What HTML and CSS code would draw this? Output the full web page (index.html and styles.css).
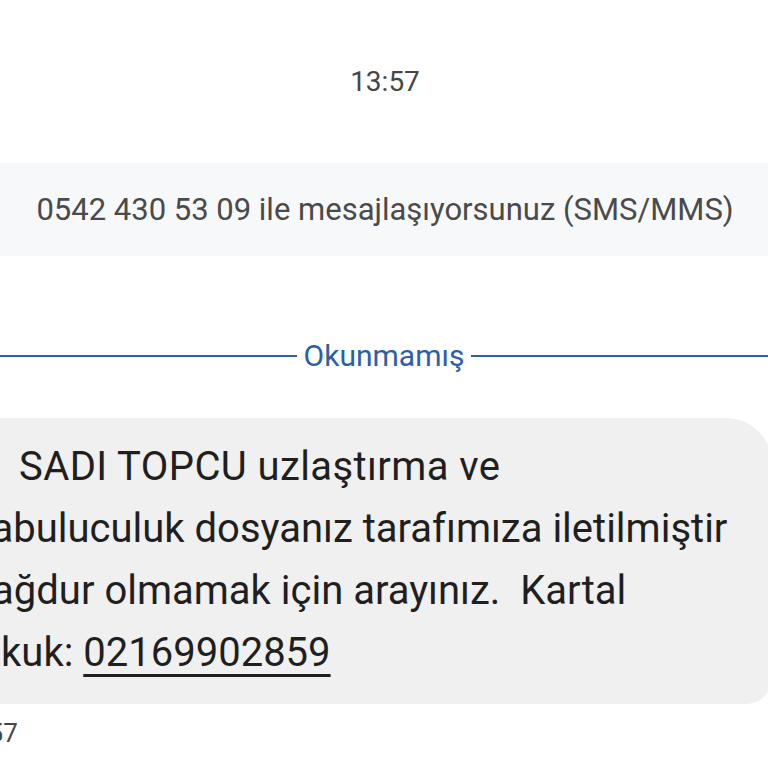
FILE: index.html
```html
<!DOCTYPE html>
<html lang="tr">
<head>
<meta charset="utf-8">
<title>Mesajlar</title>
<link rel="stylesheet" href="styles.css">
</head>
<body>
<main class="thread">
  <div class="time-header">13:57</div>
  <div class="sys-note">0542 430 53 09 ile mesajlaşıyorsunuz (SMS/MMS)</div>
  <div class="unread-divider">
    <span class="rule"></span>
    <span class="unread-label">Okunmamış</span>
    <span class="rule"></span>
  </div>
  <div class="bubble">
    <div class="line first">SADI TOPCU uzlaştırma ve</div>
    <div class="line">arabuluculuk dosyanız tarafımıza iletilmiştir</div>
    <div class="line">mağdur olmamak için arayınız.&nbsp; Kartal</div>
    <div class="line">hukuk: <span class="phone">02169902859</span></div>
  </div>
  <div class="msg-time">13:57</div>
</main>
</body>
</html>
```
FILE: styles.css
```css
html, body {
  margin: 0;
  padding: 0;
  background: #ffffff;
}
body {
  width: 768px;
  height: 768px;
  overflow: hidden;
  font-family: Roboto, "Noto Sans", "Liberation Sans", sans-serif;
}
.thread {
  display: flex;
  flex-direction: column;
}
.time-header {
  padding-top: 62px;
  height: 40px;
  line-height: 40px;
  text-align: center;
  font-size: 28px;
  color: #444746;
  padding-left: 2px;
}
.sys-note {
  margin-top: 61px;
  height: 93px;
  background: #f7f8fa;
  display: flex;
  align-items: center;
  justify-content: center;
  font-size: 31px;
  color: #4a4a4a;
  white-space: nowrap;
  padding-left: 2px;
}
.unread-divider {
  margin-top: 82px;
  height: 36px;
  display: flex;
  align-items: center;
  gap: 7px;
}
.rule {
  flex: 1;
  height: 2px;
  background: #2e5ea9;
}
.unread-label {
  font-size: 30px;
  color: #2e5ea9;
  line-height: 36px;
}
.bubble {
  margin-top: 44px;
  margin-left: -60px;
  margin-right: -4px;
  padding: 18px 0 20px 17px;
  background: #f0f0f0;
  border-radius: 12px 46px 26px 12px;
  font-size: 40px;
  line-height: 62px;
  color: #1f1f1f;
  white-space: nowrap;
}
.line.first {
  text-indent: 62px;
  letter-spacing: 0.4px;
}
.phone {
  text-decoration: underline;
  text-decoration-thickness: 3px;
  text-underline-offset: 8px;
}
.msg-time {
  margin-top: 14px;
  margin-left: -47px;
  font-size: 26px;
  line-height: 30px;
  color: #444746;
}
```
